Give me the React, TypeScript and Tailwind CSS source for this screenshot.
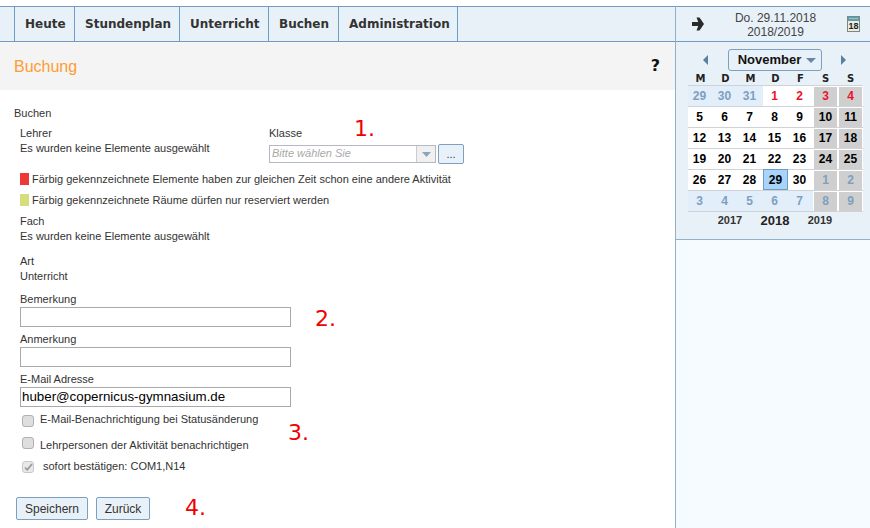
import React from "react";

const navItems = ["Heute", "Stundenplan", "Unterricht", "Buchen", "Administration"];
const widths = ["w-[60px]", "w-[105px]", "w-[89px]", "w-[70px]", "w-[120px]"];

const rows: { t: string; c: string }[][] = [
  [["29","m"],["30","m"],["31","m"],["1","r"],["2","r"],["3","r"],["4","r"]],
  [["5","n"],["6","n"],["7","n"],["8","n"],["9","n"],["10","n"],["11","n"]],
  [["12","n"],["13","n"],["14","n"],["15","n"],["16","n"],["17","n"],["18","n"]],
  [["19","n"],["20","n"],["21","n"],["22","n"],["23","n"],["24","n"],["25","n"]],
  [["26","n"],["27","n"],["28","n"],["29","t"],["30","n"],["1","m"],["2","m"]],
  [["3","m"],["4","m"],["5","m"],["6","m"],["7","m"],["8","m"],["9","m"]],
].map((r) => r.map(([t, c]) => ({ t, c })));

function DayCell({ t, c, col }: { t: string; c: string; col: number }) {
  const weekend = col >= 5;
  const muted = c === "m";
  const bg = muted && !weekend ? "bg-[#e2eefa]" : "bg-white";
  const color = muted ? "text-[#7f9fc0]" : c === "r" ? "text-[#f0102a]" : "text-black";
  return (
    <div className={`relative h-[20px] w-[25px] flex items-center justify-center ${bg}`}>
      {weekend ? (
        <div className={`w-[23px] h-[19px] bg-[#cfcfcf] flex items-center justify-center ${color}`}>{t}</div>
      ) : c === "t" ? (
        <div className="absolute left-0 top-[-1px] w-[25px] h-[21px] bg-[#a8d4fb] border border-[#6f9cc0] flex items-center justify-center text-black">{t}</div>
      ) : (
        <span className={`${color} pr-[2px]`}>{t}</span>
      )}
    </div>
  );
}

function Note({ children, className }: { children: React.ReactNode; className: string }) {
  return (
    <span className={`absolute text-[#f00000] text-[22px] leading-[26px] [font-family:'DejaVu_Sans',sans-serif] ${className}`}>
      {children}
    </span>
  );
}

const inputCls = "block w-[271px] h-[20px] border border-[#a9a9a9] bg-white ml-[20px]";

export default function App() {
  return (
    <div className="relative w-[870px] h-[528px] overflow-hidden bg-white pt-[6px] flex text-[#333] text-[11px] [font-family:'Liberation_Sans',Arial,sans-serif]">
      {/* main */}
      <div className="w-[675px] shrink-0">
        <nav className="h-[36px] flex bg-[#e9f1f8] border-t border-b border-[#6f9cc4] pl-[14px] text-[#333] text-[12px] font-bold [font-family:'DejaVu_Sans',sans-serif]">
          {navItems.map((n, i) => (
            <div key={n} className={`${widths[i]} border-l border-[#6f9cc4] ${i === 4 ? "border-r" : ""} flex items-center pl-[10px]`}>
              {n}
            </div>
          ))}
        </nav>
        <div className="h-[48px] bg-[#f4f4f4] flex items-center justify-between pl-[14px] pr-[15px]">
          <span className="text-[#ff9c33] text-[16px] pt-[1px]">Buchung</span>
          <span className="text-[#111] text-[16px] font-bold [font-family:'DejaVu_Sans',sans-serif]">?</span>
        </div>

        <div className="leading-[15px]">
          <div className="pl-[14px] pt-[16px]">Buchen</div>
          <div className="flex pl-[20px] mt-[5px] h-[40px]">
            <div className="w-[249px] leading-[15px]">
              <div>Lehrer</div>
              <div>Es wurden keine Elemente ausgewählt</div>
            </div>
            <div>
              <div className="leading-[15px]">Klasse</div>
              <div className="flex items-center mt-[3px]">
                <div className="w-[167px] h-[18px] border border-[#b4bac4] flex bg-white">
                  <span className="flex-1 pl-[2px] italic text-[#a9a9a9] leading-[15px]">Bitte wählen Sie</span>
                  <span className="w-[19px] bg-[#f0f0f0] border-l border-[#c8ccd2] flex items-center justify-center">
                    <svg width="9" height="5" viewBox="0 0 9 5"><path d="M0 0h9L4.500 5z" fill="#8aa5c4" /></svg>
                  </span>
                </div>
                <div className="ml-[2px] w-[26px] h-[20px] rounded-[2px] border border-[#7d9fc2] bg-[#e9f1f8] text-[#333] flex items-center justify-center text-[11px]">...</div>
              </div>
            </div>
          </div>

          <div className="flex items-center pl-[20px] mt-[7px] h-[12px]">
            <span className="w-[9px] h-[12px] bg-[#ee3838] mr-[3px]" />
            Färbig gekennzeichnete Elemente haben zur gleichen Zeit schon eine andere Aktivität
          </div>
          <div className="flex items-center pl-[20px] mt-[9px] h-[12px]">
            <span className="w-[9px] h-[12px] bg-[#d5dd7c] mr-[3px]" />
            Färbig gekennzeichnete Räume dürfen nur reserviert werden
          </div>

          <div className="pl-[20px] mt-[8px]">Fach</div>
          <div className="pl-[20px]">Es wurden keine Elemente ausgewählt</div>
          <div className="pl-[20px] mt-[10px]">Art</div>
          <div className="pl-[20px]">Unterricht</div>

          <div className="pl-[20px] mt-[8px]">Bemerkung</div>
          <div className={inputCls} />
          <div className="pl-[20px] mt-[5px]">Anmerkung</div>
          <div className={inputCls} />
          <div className="pl-[20px] mt-[5px]">E-Mail Adresse</div>
          <div className={`${inputCls} flex items-center pl-[1px] pb-[1px] text-[13.33px] text-black`}>huber@copernicus-gymnasium.de</div>

          <div className="flex items-start pl-[22px] mt-[5px] h-[20px]">
            <span className="w-[12px] h-[12px] mt-[3px] rounded-[3px] border border-[#b0b0b0] bg-[#dedede]" />
            <span className="ml-[6px]">E-Mail-Benachrichtigung bei Statusänderung</span>
          </div>
          <div className="flex items-start pl-[22px] mt-[3px] h-[23px]">
            <span className="w-[12px] h-[12px] mt-[2px] rounded-[3px] border border-[#b0b0b0] bg-[#dedede]" />
            <span className="ml-[6px] mt-[3px]">Lehrpersonen der Aktivität benachrichtigen</span>
          </div>
          <div className="flex items-start pl-[22px] h-[20px]">
            <span className="w-[12px] h-[12px] mt-[3px] rounded-[3px] border border-[#c8c8c8] bg-[#e8e8e8] flex items-center justify-center">
              <svg width="9" height="8" viewBox="0 0 9 8"><path d="M1 4.500l2.200 2.300L8 1" fill="none" stroke="#9a9a9a" strokeWidth="1.800" /></svg>
            </span>
            <span className="ml-[9px] mt-[1px]">sofort bestätigen: COM1,N14</span>
          </div>

          <div className="flex pl-[16px] mt-[19px] gap-[8px]">
            <div className="w-[72px] h-[23px] rounded-[2px] border border-[#7d9fc2] bg-[#e9f1f8] flex items-center justify-center text-[12px] leading-none">Speichern</div>
            <div className="w-[54px] h-[23px] rounded-[2px] border border-[#7d9fc2] bg-[#e9f1f8] flex items-center justify-center text-[12px] leading-none">Zurück</div>
          </div>
        </div>

        <Note className="left-[354px] top-[116px]">1.</Note>
        <Note className="left-[315px] top-[306px]">2.</Note>
        <Note className="left-[288px] top-[420px]">3.</Note>
        <Note className="left-[185px] top-[495px]">4.</Note>
      </div>

      {/* sidebar */}
      <aside className="w-[195px] shrink-0 border-l border-[#8fb0c8] bg-[#f6fbff] flex flex-col">
        <div className="h-[36px] shrink-0 border-t border-b border-[#6f9cc4] bg-[#e9f1f8] flex items-center pl-[16px] pr-[10px] text-[#444] text-[12px]">
          <svg width="12" height="14" viewBox="0 0 12 14">
            <path d="M0 5h7V9H0z" fill="#2a2a2a" />
            <path d="M4.500 0.500h3L12 7 7.500 13.500h-3L7 7z" fill="#2a2a2a" />
          </svg>
          <div className="flex-1 text-center leading-[14px] pt-[2px]">
            <div>Do. 29.11.2018</div>
            <div>2018/2019</div>
          </div>
          <svg width="13" height="16" viewBox="0 0 13 16" className="-mt-[1px]">
            <rect x="0.500" y="0.500" width="12" height="15" fill="#ececdf" stroke="#7a8a80" />
            <rect x="1" y="1" width="11" height="4" fill="#5f9cbc" />
            <rect x="2" y="2" width="9" height="1" fill="#8fd0a0" />
            <text x="6.500" y="13" textAnchor="middle" fontSize="9" fontWeight="bold" fill="#222" fontFamily="Liberation Sans">18</text>
          </svg>
        </div>
        <div className="h-[198px] shrink-0 border-b border-[#8fb0c8] bg-[#e9f1f8] flex flex-col items-start pl-[12px] font-bold">
          <div className="flex items-center mt-[7px] h-[22px] ml-[15px]">
            <svg width="5" height="10" viewBox="0 0 5 10" className="mr-[20px]"><path d="M5 0v10L0 5z" fill="#5a7fa0" /></svg>
            <div className="w-[94px] h-[22px] pl-[4px] rounded-[3px] border border-[#7d9fc2] flex items-center justify-center text-[13px] text-[#111]">
              November
              <svg width="10" height="5" viewBox="0 0 10 5" className="ml-[5px]"><path d="M0 0h10L5 5z" fill="#6a86a6" /></svg>
            </div>
            <svg width="5" height="10" viewBox="0 0 5 10" className="ml-[19px]"><path d="M0 0v10L5 5z" fill="#5a7fa0" /></svg>
          </div>
          <div className="w-[175px] flex text-[10px] text-[#222] h-[14px] items-center [font-family:'DejaVu_Sans',sans-serif]">
            {["M", "D", "M", "D", "F", "S", "S"].map((d, i) => (
              <span key={i} className="w-[25px] text-center">{d}</span>
            ))}
          </div>
          <div className="w-[175px] text-[12px] border-t border-[#cfd2d6]">
            {rows.map((r, ri) => (
              <div key={ri} className="flex border-b border-[#cfd2d6]">
                {r.map((d, ci) => (
                  <DayCell key={ci} t={d.t} c={d.c} col={ci} />
                ))}
              </div>
            ))}
          </div>
          <div className="w-[175px] flex items-center h-[18px] text-[#333]">
            <span className="ml-[24px] w-[36px] text-center text-[11px] -mt-[1px]">2017</span>
            <span className="ml-[6px] w-[42px] text-center text-[13px] text-[#222]">2018</span>
            <span className="ml-[6px] w-[36px] text-center text-[11px] -mt-[1px]">2019</span>
          </div>
        </div>
      </aside>
    </div>
  );
}
